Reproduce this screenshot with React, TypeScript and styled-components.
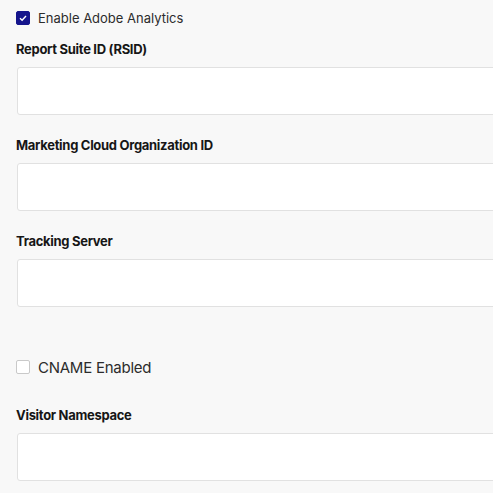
import React from 'react'
import styled, { createGlobalStyle } from 'styled-components'

const GlobalStyle = createGlobalStyle`
  html, body {
    margin: 0;
    padding: 0;
    background: #f8f8f8;
  }
  body {
    font-family: Inter, "Open Sans", Arial, sans-serif;
    color: #1f1f1f;
  }
`

const Page = styled.div`
  padding: 8px 0 0 16px;
  height: 485px;
  overflow: hidden;
`

const CheckRow = styled.label<{ size: number; spacing: number }>`
  display: flex;
  align-items: center;
  gap: 8px;
  height: 20px;
  font-size: ${({ size }) => size}px;
  letter-spacing: ${({ spacing }) => spacing}px;
  color: #2c2c2c;
`

const Box = styled.span<{ checked?: boolean }>`
  width: 14px;
  height: 14px;
  box-sizing: border-box;
  border-radius: 2px;
  display: flex;
  align-items: center;
  justify-content: center;
  background: ${({ checked }) => (checked ? '#15158c' : '#ffffff')};
  border: 1px solid ${({ checked }) => (checked ? '#15158c' : '#c9c9c9')};
`

const Field = styled.div`
  margin-bottom: 21px;
`

const Label = styled.div`
  font-size: 13px;
  font-weight: 700;
  line-height: 18px;
  letter-spacing: -0.3px;
  margin-bottom: 9px;
  color: #161616;
`

const Input = styled.input`
  display: block;
  box-sizing: border-box;
  width: calc(100% + 20px);
  height: 48px;
  margin-left: 1px;
  background: #ffffff;
  border: 1px solid #e1e1e1;
  border-radius: 3px;
  outline: none;
`

const Check = ({ checked }: { checked?: boolean }) => (
  <Box checked={checked}>
    {checked && (
      <svg width="10" height="10" viewBox="0 0 10 10">
        <path d="M2 5.2 L4.1 7.2 L8 3" fill="none" stroke="#fff" strokeWidth="1.4" />
      </svg>
    )}
  </Box>
)

export default function App() {
  return (
    <>
      <GlobalStyle />
      <Page>
        <CheckRow size={13} spacing={0} style={{ marginBottom: 12 }}>
          <Check checked />
          Enable Adobe Analytics
        </CheckRow>
        <Field>
          <Label>Report Suite ID (RSID)</Label>
          <Input />
        </Field>
        <Field>
          <Label>Marketing Cloud Organization ID</Label>
          <Input />
        </Field>
        <Field>
          <Label>Tracking Server</Label>
          <Input />
        </Field>
        <CheckRow size={15} spacing={-0.25} style={{ marginTop: 50, marginBottom: 29 }}>
          <Check />
          CNAME Enabled
        </CheckRow>
        <Field>
          <Label>Visitor Namespace</Label>
          <Input />
        </Field>
      </Page>
    </>
  )
}
